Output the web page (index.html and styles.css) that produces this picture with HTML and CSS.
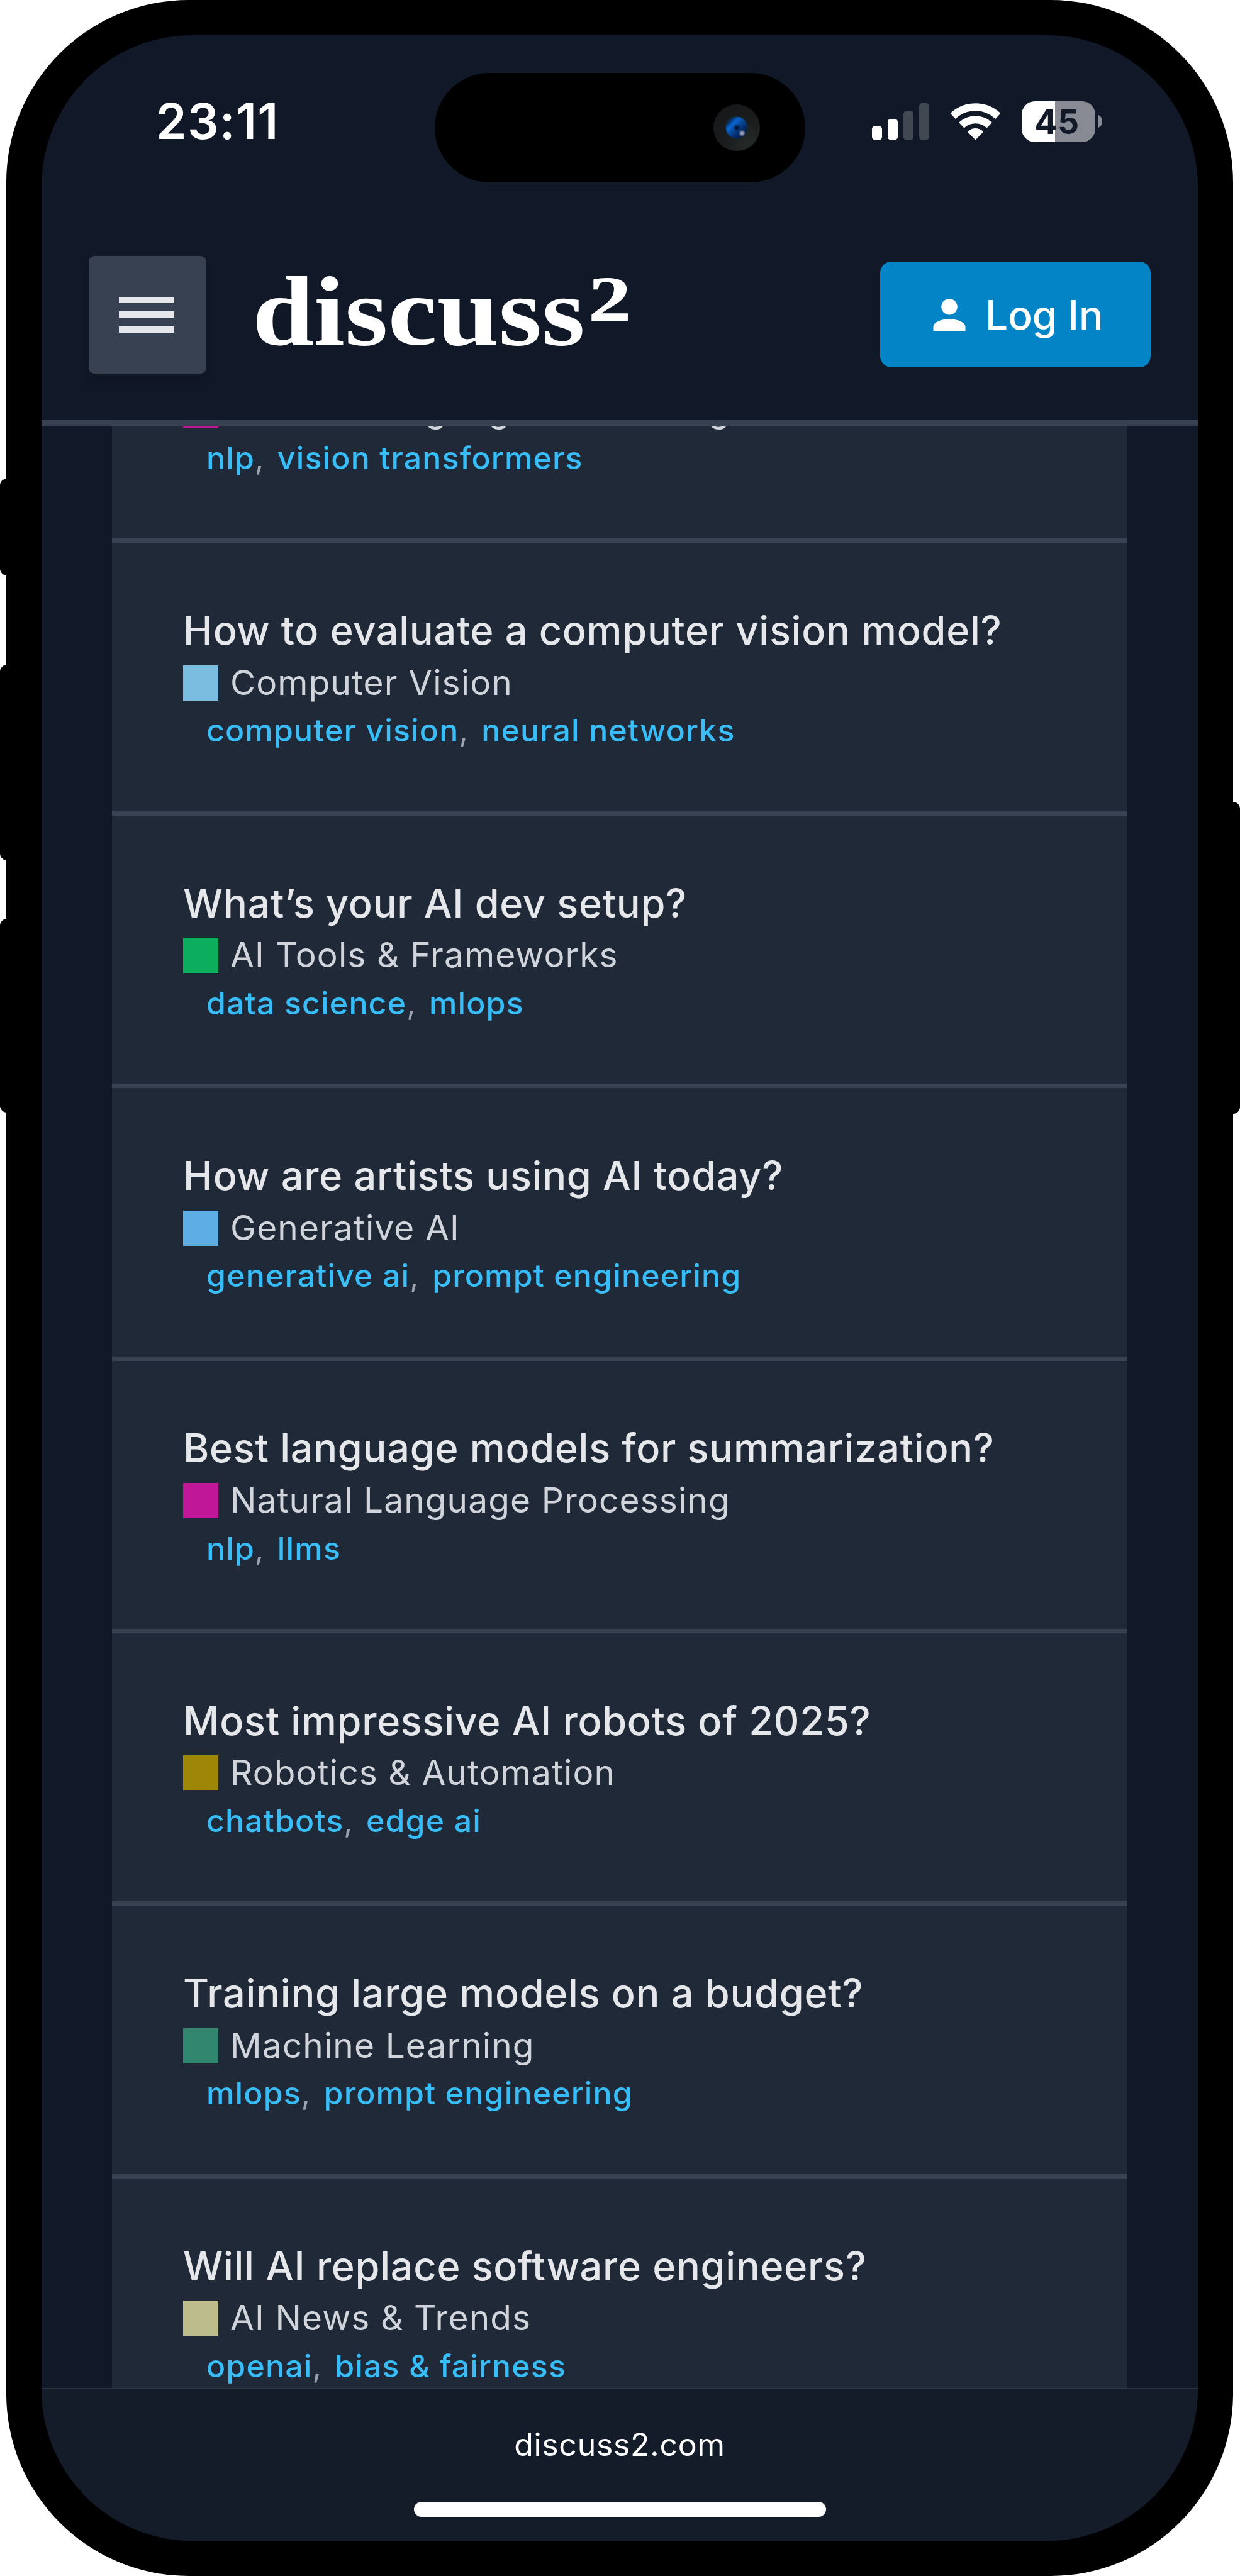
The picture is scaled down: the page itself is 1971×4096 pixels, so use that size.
FILE: index.html
```html
<!DOCTYPE html>
<html lang="en">
<head>
<meta charset="utf-8">
<title>discuss²</title>
<link rel="stylesheet" href="styles.css">
</head>
<body>
<div class="device">
  <span class="key key-action"></span>
  <span class="key key-up"></span>
  <span class="key key-down"></span>
  <span class="key key-power"></span>
  <div class="phone">
    <div class="island"><span class="camera"><span class="lens"></span></span></div>
    <div class="screen">
      <div class="status">
        <span class="time">23:11</span>
        <div class="indicators">
          <svg class="signal" viewBox="0 0 91 58.5">
            <rect x="0" y="36.3" width="16" height="22.2" rx="5" fill="#fff"/>
            <rect x="25" y="25" width="16" height="33.5" rx="5" fill="#fff"/>
            <rect x="50" y="12.7" width="16" height="45.8" rx="5" fill="#424852"/>
            <rect x="75" y="0" width="16" height="58.5" rx="5" fill="#424852"/>
          </svg>
          <svg class="wifi" viewBox="0 0 79 58.5">
            <g fill="none" stroke="#fff" stroke-width="12">
              <path d="M3.6 20.6A52.2 52.2 0 0 1 75.4 20.6"/>
              <path d="M17.3 35.1A32.2 32.2 0 0 1 61.7 35.1"/>
            </g>
            <path d="M39.5 58.5 28.4 47.2C27.5 46.3 27.6 45 28.5 44.1A17 17 0 0 1 50.5 44.1C51.4 45 51.5 46.3 50.6 47.2Z" fill="#fff"/>
          </svg>
          <div class="battery"><span class="level">45</span><span class="nub"></span></div>
        </div>
      </div>
      <header class="header">
        <button class="menu" aria-label="Menu"><i></i><i></i><i></i></button>
        <div class="logo"><span class="word">discuss</span><span class="power">²</span></div>
        <button class="login">
          <svg viewBox="4 4 16 16"><path fill="#fff" d="M12 12c2.21 0 4-1.79 4-4s-1.79-4-4-4-4 1.79-4 4 1.79 4 4 4zm0 2c-2.67 0-8 1.34-8 4v2h16v-2c0-2.66-5.33-4-8-4z"/></svg>
          <span>Log In</span>
        </button>
      </header>
      <main class="feed">
        <ul class="topics">
          <li class="topic scrolled"><p class="cat"><i class="sw nlp"></i>Natural Language Processing</p><p class="tags"><a>nlp</a>, <a>vision transformers</a></p></li>
          <li class="topic"><h2>How to evaluate a computer vision model?</h2><p class="cat"><i class="sw vision"></i>Computer Vision</p><p class="tags"><a>computer vision</a>, <a>neural networks</a></p></li>
          <li class="topic"><h2>What’s your AI dev setup?</h2><p class="cat"><i class="sw tools"></i>AI Tools &amp; Frameworks</p><p class="tags"><a>data science</a>, <a>mlops</a></p></li>
          <li class="topic"><h2>How are artists using AI today?</h2><p class="cat"><i class="sw gen"></i>Generative AI</p><p class="tags"><a>generative ai</a>, <a>prompt engineering</a></p></li>
          <li class="topic"><h2>Best language models for summarization?</h2><p class="cat"><i class="sw nlp"></i>Natural Language Processing</p><p class="tags"><a>nlp</a>, <a>llms</a></p></li>
          <li class="topic"><h2>Most impressive AI robots of 2025?</h2><p class="cat"><i class="sw robots"></i>Robotics &amp; Automation</p><p class="tags"><a>chatbots</a>, <a>edge ai</a></p></li>
          <li class="topic"><h2>Training large models on a budget?</h2><p class="cat"><i class="sw ml"></i>Machine Learning</p><p class="tags"><a>mlops</a>, <a>prompt engineering</a></p></li>
          <li class="topic"><h2>Will AI replace software engineers?</h2><p class="cat"><i class="sw news"></i>AI News &amp; Trends</p><p class="tags"><a>openai</a>, <a>bias &amp; fairness</a></p></li>
        </ul>
      </main>
      <footer class="browser-bar">
        <span class="url">discuss2.com</span>
        <span class="home"></span>
      </footer>
    </div>
  </div>
</div>
</body>
</html>
```
FILE: styles.css
```css
* { box-sizing: border-box; margin: 0; padding: 0; }

body {
  background: #fff;
  font-family: Inter, "Liberation Sans", sans-serif;
}

.device {
  position: relative;
  width: 1971px;
  height: 4096px;
  padding: 0 11px 0 10px;
  overflow: hidden;
}

/* hardware */
.key { position: absolute; left: 0; width: 24px; background: #000; border-radius: 11px; }
.key-action { top: 761px; height: 154px; }
.key-up { top: 1057px; height: 311px; }
.key-down { top: 1461px; height: 308px; }
.key-power { left: auto; right: 0; top: 1275px; height: 496px; }

.phone {
  position: relative;
  height: 4096px;
  padding: 56px;
  background: #000;
  border-radius: 290px;
}

.island {
  position: absolute;
  left: 681px;
  top: 116px;
  width: 589px;
  height: 174px;
  padding: 50px 72px 0 0;
  border-radius: 87px;
  background: #000;
  display: flex;
  justify-content: flex-end;
}
.camera {
  width: 74px;
  height: 74px;
  border-radius: 50%;
  background: radial-gradient(circle at 75% 85%, #252a28, #191b1c 50%, #151617);
  display: grid;
  place-items: center;
}
.lens {
  width: 38px;
  height: 38px;
  border: 2px solid #1a2528;
  border-radius: 50%;
  background:
    radial-gradient(circle at 75% 76%, #b4c0d4 0, #5d6c86 9%, transparent 16%),
    radial-gradient(circle at 50% 50%, #04102c 0, #04102c 4%, transparent 24%),
    linear-gradient(135deg, #03183f 12%, #0a66d0 32%, #08489a 48%, #052a66 68%, #020f2c);
}

.screen {
  height: 3984px;
  border-radius: 240px;
  overflow: hidden;
  background: #111827;
  display: flex;
  flex-direction: column;
}

/* status bar */
.status {
  flex: none;
  height: 276px;
  padding: 97px 152px 0 182px;
  display: flex;
  justify-content: space-between;
  align-items: flex-start;
  color: #fff;
}
.time { font-size: 78px; line-height: 80px; font-weight: 600; letter-spacing: 1.3px; }
.indicators { height: 80px; display: flex; align-items: center; gap: 34px; }
.signal { width: 91px; height: 58.5px; }
.wifi { width: 79px; height: 58.5px; }
.battery { display: flex; align-items: center; gap: 4.5px; }
.level {
  width: 117px;
  height: 65px;
  border-radius: 21px;
  background: linear-gradient(90deg, #fff 53px, #888b94 53px);
  color: #111827;
  font-size: 53px;
  font-weight: 700;
  line-height: 66px;
  letter-spacing: 1px;
  padding-left: 21px;
}
.nub { width: 7px; height: 20px; border-radius: 0 7px 7px 0 / 0 10px 10px 0; background: #888b94; }

/* site header */
.header {
  flex: none;
  height: 346px;
  padding: 0 75px;
  border-bottom: 10px solid #374151;
  display: flex;
  align-items: center;
}
button { border: 0; font: inherit; color: inherit; }
.menu {
  width: 187px;
  height: 187px;
  padding-right: 3px;
  border-radius: 9px;
  background: #374151;
  box-shadow: 0 14px 16px -4px rgba(0, 0, 0, .14);
  display: flex;
  flex-direction: column;
  align-items: center;
  justify-content: center;
  gap: 13.5px;
}
.menu i { width: 88px; height: 10px; background: #e5e7eb; }
.logo {
  flex: 1;
  margin-left: 73px;
  padding-bottom: 14px;
  display: flex;
  align-items: baseline;
  color: #fff;
  font-family: "Liberation Serif", serif;
  font-weight: 700;
  line-height: 180px;
}
.word { width: 533px; font-size: 157px; transform: scaleX(1.122); transform-origin: left; }
.power { font-size: 170px; transform: translateY(7px) scaleX(1.36); transform-origin: left; }
.login {
  width: 430px;
  height: 168px;
  border-radius: 18px;
  background: #0284c7;
  color: #fff;
  display: flex;
  align-items: center;
  padding-left: 84px;
  gap: 31px;
  font-size: 64px;
  font-weight: 500;
}
.login svg { width: 52px; height: 51px; }

/* topic list, scrolled part-way through its first row */
.feed { flex: 1; overflow: hidden; padding: 0 112px; }
.topics { list-style: none; margin-top: -248px; background: #1f2937; }
.topic {
  height: 433.4px;
  padding: 98.8px 0 0 113px;
  border-bottom: 7px solid #374151;
}
.scrolled { padding-top: 178.8px; }
h2 { font-size: 63px; line-height: 80px; font-weight: 500; letter-spacing: .72px; color: #e5e7eb; }
.cat {
  height: 56px;
  margin-top: 15.7px;
  display: flex;
  gap: 19px;
  font-size: 55px;
  line-height: 54px;
  letter-spacing: 1.1px;
  color: #d1d5db;
}
.sw { width: 56px; height: 56px; }
.nlp { background: #c01698; }
.vision { background: #7bbde0; }
.tools { background: #0dad5e; }
.gen { background: #5eade5; }
.robots { background: #9e8706; }
.ml { background: #32866e; }
.news { background: #bcbc8c; }
.tags {
  margin-top: 17.6px;
  padding-left: 37px;
  font-size: 50px;
  line-height: 60px;
  letter-spacing: 1.15px;
  color: #9ca3af;
}
.tags a { color: #38bdf8; font-weight: 500; }
.tags a + a { margin-left: 5px; }

/* browser bar */
.browser-bar {
  flex: none;
  height: 243px;
  padding-top: 58px;
  border-top: 2px solid #2e3641;
  background: #141b29;
  display: flex;
  flex-direction: column;
  align-items: center;
}
.url { font-size: 50px; line-height: 60px; letter-spacing: .7px; color: #fff; }
.home { width: 655px; height: 24px; margin-top: 61px; border-radius: 12px; background: #fff; }
```
